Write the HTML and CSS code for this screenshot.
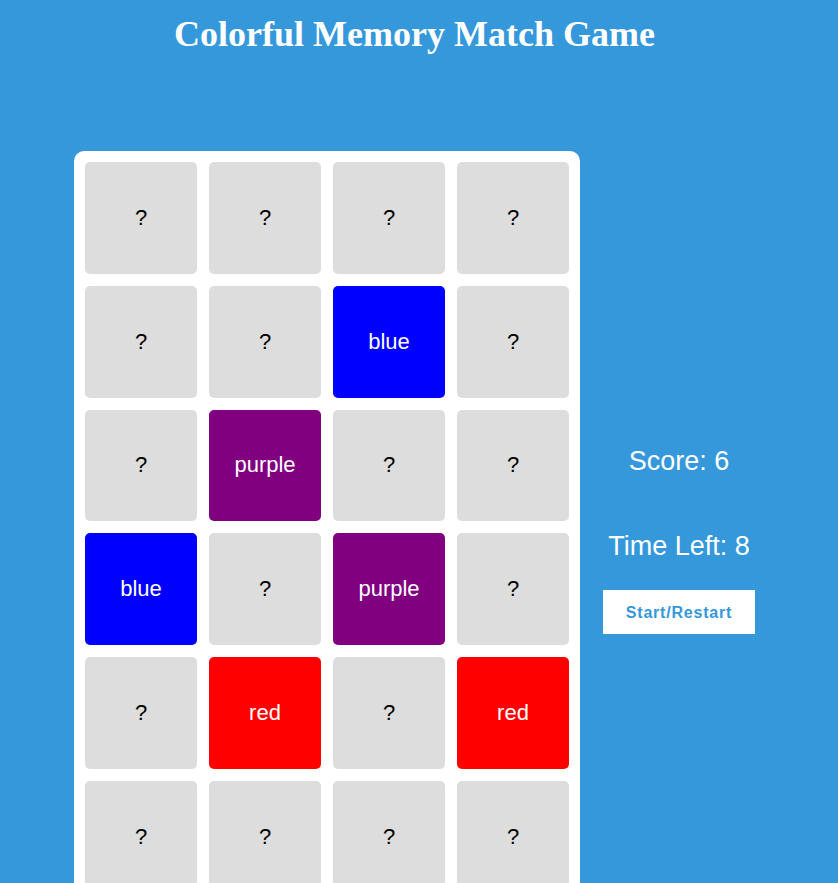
FILE: index.html
```html
<!DOCTYPE html>
<html lang="en">
<head>
<meta charset="utf-8">
<title>Colorful Memory Match Game</title>
<link rel="stylesheet" href="styles.css">
</head>
<body>
<h1 class="title">Colorful Memory Match Game</h1>
<div class="game">
  <div class="board">
    <div class="card">?</div>
    <div class="card">?</div>
    <div class="card">?</div>
    <div class="card">?</div>
    <div class="card">?</div>
    <div class="card">?</div>
    <div class="card open blue">blue</div>
    <div class="card">?</div>
    <div class="card">?</div>
    <div class="card open purple">purple</div>
    <div class="card">?</div>
    <div class="card">?</div>
    <div class="card open blue">blue</div>
    <div class="card">?</div>
    <div class="card open purple">purple</div>
    <div class="card">?</div>
    <div class="card">?</div>
    <div class="card open red">red</div>
    <div class="card">?</div>
    <div class="card open red">red</div>
    <div class="card">?</div>
    <div class="card">?</div>
    <div class="card">?</div>
    <div class="card">?</div>
  </div>
  <div class="panel">
    <div class="stat score">Score: 6</div>
    <div class="stat time">Time Left: 8</div>
    <button class="btn">Start/Restart</button>
  </div>
</div>
</body>
</html>
```

FILE: styles.css
```css
html, body {
  margin: 0;
  padding: 0;
}
body {
  background: #3498db;
  font-family: "Liberation Sans", Arial, sans-serif;
  color: #fff;
  padding-right: 9px;
}
.title {
  font-family: "Liberation Serif", "Times New Roman", serif;
  font-weight: bold;
  font-size: 36px;
  text-align: center;
  margin: 0;
  padding-top: 12px;
  line-height: 44px;
}
.game {
  display: flex;
  justify-content: center;
  align-items: center;
  gap: 23px;
  margin-top: 95px;
}
.board {
  background: #fff;
  border-radius: 10px;
  padding: 11px;
  display: grid;
  grid-template-columns: repeat(4, 112px);
  grid-auto-rows: 111.8px;
  gap: 12px;
}
.card {
  background: #ddd;
  border-radius: 5px;
  display: flex;
  align-items: center;
  justify-content: center;
  font-size: 22px;
  color: #000;
}
.card.open { color: #fff; }
.card.blue { background: #0000ff; }
.card.purple { background: #800080; }
.card.red { background: #ff0000; }
.panel {
  display: flex;
  flex-direction: column;
  align-items: center;
  width: 152px;
  margin-top: 25px;
}
.stat {
  font-size: 27px;
  line-height: 31px;
}
.score { margin-bottom: 54px; }
.time { margin-bottom: 28px; }
.btn {
  background: #fff;
  color: #3498db;
  border: 0;
  font-family: "Liberation Sans", Arial, sans-serif;
  font-weight: bold;
  font-size: 16px;
  letter-spacing: 0.8px;
  width: 152px;
  height: 44px;
  padding: 3px 0 0;
}
```
